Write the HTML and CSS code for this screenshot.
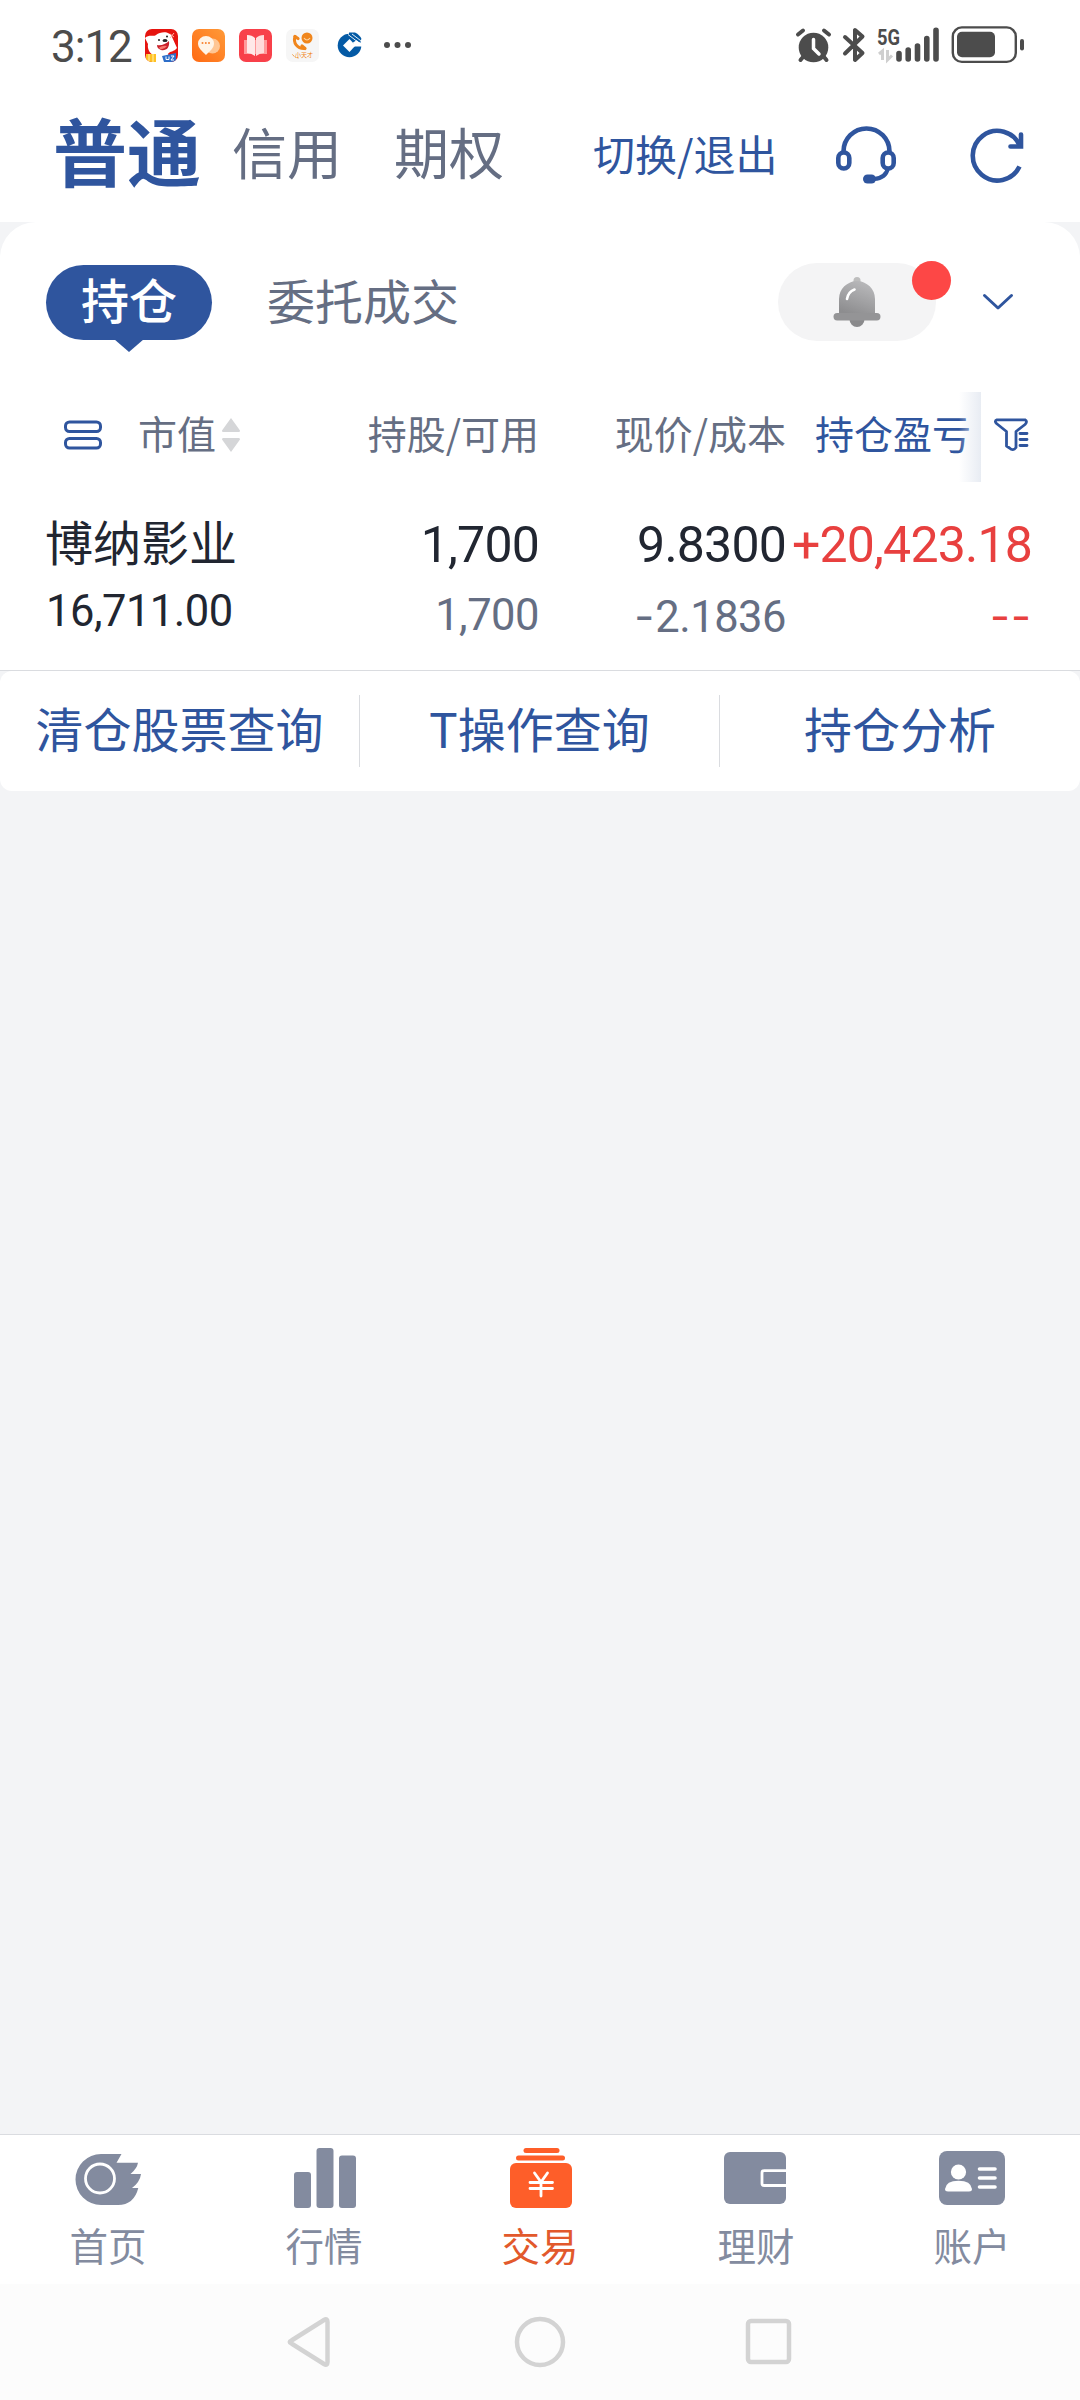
FILE: index.html
```html
<!DOCTYPE html>
<html lang="zh-CN">
<head>
    <meta charset="UTF-8">
    <meta name="viewport" content="width=device-width, initial-scale=1.0">
    <title>交易</title>
    <link rel="stylesheet" href="styles.css">
</head>
<body>
    <div class="status">
        <span class="time">3:12</span>
        <div class="apps">
            <svg width="33" height="33" viewBox="0 0 33 33">
                <clipPath id="app"><rect width="33" height="33" rx="7"/></clipPath>
                <g clip-path="url(#app)">
                    <rect width="33" height="33" fill="#e6140f"/>
                    <path d="M0 9C4 5 8 8 11 6C16 2 25 2 27 8L32 19C29 23 25 22 23 25L26 33H10V27C5 25 2 20 3 15Z" fill="#fff"/>
                    <path d="M12 16C16 17 21 15 24 12C25 19 21 22 16 21C13 20 12 18 12 16Z" fill="#c9202a"/>
                    <path d="M14 18.500Q18 16 22 17Q19 21 15 20Z" fill="#f7776d"/>
                    <ellipse cx="20" cy="11.500" rx="2.500" ry="1.600" fill="#222"/>
                    <circle cx="14" cy="11" r="1" fill="#222"/>
                    <circle cx="22" cy="7.500" r="1" fill="#222"/>
                    <path d="M25 5l4 3M29 4l-4 5" stroke="#ffb5a8"/>
                    <path d="M1 25H11V33H1Z" fill="#ffc123"/>
                    <path d="M4 25V33M8 25V33" stroke="#fff1b0"/>
                    <path d="M17 27L31 24V33H19Z" fill="#2d6ec9"/>
                    <path d="M21 27.500v3h3v-3M26 27h3l-3 4h3" stroke="#fff" fill="none"/>
                </g>
            </svg>
            <svg width="33" height="33" viewBox="0 0 33 33">
                <linearGradient id="orange" x1="0" y1="1" x2="1" y2="0">
                    <stop offset="0" stop-color="#ff6a14"/>
                    <stop offset="1" stop-color="#ff9a38"/>
                </linearGradient>
                <rect width="33" height="33" rx="7" fill="url(#orange)"/>
                <circle cx="20.500" cy="17" r="7.500" fill="#ffc694"/>
                <path d="M14 26C10 22 6 19 6 14.500A8 7.500 0 0 1 22 14.500C22 19 18 22 14 26Z" fill="#fff4e8"/>
                <g fill="#f98330"><circle cx="10.500" cy="14" r="1"/><circle cx="13.800" cy="14" r="1"/><circle cx="17" cy="14" r="1"/></g>
            </svg>
            <svg width="33" height="33" viewBox="0 0 33 33">
                <rect width="33" height="33" rx="7" fill="#f8404a"/>
                <path d="M5 11H28V25H5Z" fill="#ff9a9b"/>
                <path d="M8 6Q13 6 16 9V27Q12 24 8 24Z" fill="#ffe9e9"/>
                <path d="M25 6Q20 6 17 9V27Q21 24 25 24Z" fill="#ffdcdc"/>
            </svg>
            <svg width="33" height="33" viewBox="0 0 33 33">
                <rect width="33" height="33" rx="7" fill="#f6f6f6"/>
                <circle cx="21" cy="9" r="5.500" fill="#f0861c"/>
                <path d="M18 9Q21 13 24 9" stroke="#ffd4a0" fill="none" stroke-width="1.200"/>
                <path d="M9 7.500C7 14 11 19.500 18 19.500" stroke="#f0861c" stroke-width="3" fill="none" stroke-linecap="round"/>
                <path d="M9 7.500l3 2M16 17l3 2.500" stroke="#f0861c" stroke-width="3.200" stroke-linecap="round"/>
                <text x="9" y="28" class="tiny">小天才</text>
                <path d="M6.500 25.500q2 3 6 3.500" stroke="#f0861c" fill="none" stroke-dasharray="2 1"/>
            </svg>
            <svg width="33" height="33" viewBox="0 0 33 33">
                <circle cx="16.500" cy="16.500" r="11.800" fill="#045aa5"/>
                <path d="M16.500 10L22.500 16.500L16.500 23L10 16.500Z" fill="#fff"/>
                <path d="M20 13.500L24 11L27 13.500H29V17.500H21Z" fill="#fff"/>
                <path d="M16 3.500H22Q27 6 28.500 10L26 13L16 5Z" fill="#045aa5"/>
                <path d="M15 5.500L25.500 13.500M19 5L27.500 11.500" stroke="#fff" stroke-width=".9"/>
            </svg>
            <svg width="33" height="33" viewBox="0 0 33 33" fill="#4c4c4c">
                <circle cx="7" cy="16" r="3"/><circle cx="17.500" cy="16" r="3"/><circle cx="28" cy="16" r="3"/>
            </svg>
        </div>
        <svg class="system" width="230" height="38" viewBox="0 0 230 38" fill="#4c4c4c" stroke="#4c4c4c">
            <g stroke-linecap="round" stroke-width="4">
                <circle cx="18.500" cy="21.500" r="14.800" stroke="none"/>
                <path d="M3 8.500L8 4.500M34 8.500L29 4.500M8 31L5.500 34M29 31L31.500 34"/>
                <path d="M18.500 13.500V22.500L24 28" stroke="#fff" stroke-width="3.500" fill="none"/>
            </g>
            <path d="M50 11L67.500 27L60 34V23.500M50 27.500L67.500 10.500L60 4V17" fill="none" stroke-width="4" stroke-linecap="round" stroke-linejoin="round"/>
            <text x="82" y="18.500" stroke="none" textLength="23" lengthAdjust="spacingAndGlyphs" class="net">5G</text>
            <path d="M84 28L87.500 25V34M92.500 24V34L97 29.500" stroke="#cfcfcf" stroke-width="3" fill="none"/>
            <path d="M104 27.500V33M113.200 24V33M122.500 20V33M131.800 12.500V33M141 4.200V33" stroke-width="5.600" stroke-linecap="round"/>
            <rect x="157.800" y="1.400" width="63" height="34.500" rx="9" fill="none" stroke-width="2.400"/>
            <rect x="162" y="5.700" width="38" height="25.600" rx="5" stroke="none"/>
            <rect x="225" y="13" width="4" height="11.500" rx="2" stroke="none"/>
        </svg>
    </div>

    <header class="top">
        <nav class="accounts">
            <a class="current">普通</a>
            <a>信用</a>
            <a>期权</a>
        </nav>
        <a class="switch">切换/退出</a>
        <svg class="service" width="60" height="58" viewBox="0 0 60 58" fill="none" stroke="#2f559e" stroke-width="4.600">
            <path d="M7.500 25.500A23 23 0 0 1 53.500 25.500"/>
            <rect x="2.300" y="26.500" width="11" height="16" rx="5.500"/>
            <rect x="46.700" y="26.500" width="11" height="16" rx="5.500"/>
            <path d="M52 42Q50 52 38 53" stroke-width="4"/>
            <rect x="27" y="48.500" width="13" height="9" rx="4.500" fill="#2f559e" stroke="none"/>
        </svg>
        <svg class="refresh" width="56" height="56" viewBox="0 0 56 56" fill="none" stroke="#2f559e" stroke-width="4.600">
            <path d="M50.500 38.500A24.600 24.800 0 1 1 51 18"/>
            <path d="M52 6.500V18.500H41.500" stroke-linecap="round"/>
        </svg>
    </header>

    <main class="page">
        <section class="holdings">
            <div class="tabs">
                <span class="pill">持仓</span>
                <span class="tab">委托成交</span>
                <span class="alert">
                    <svg width="48" height="50" viewBox="0 0 48 50">
                        <linearGradient id="bell" x1="0.700" y1="0" x2="0.300" y2="1">
                            <stop offset="0" stop-color="#b9b9bb"/>
                            <stop offset="1" stop-color="#8d8d8f"/>
                        </linearGradient>
                        <circle cx="24" cy="3.500" r="3.500" fill="#bdbdbd"/>
                        <circle cx="24" cy="42.500" r="7.500" fill="#8a8a8c"/>
                        <path d="M6 37V22A18 18 0 0 1 42 22V37Z" fill="url(#bell)"/>
                        <rect x="0.500" y="36" width="47" height="7.500" rx="3.700" fill="#949496"/>
                        <path d="M14 22Q15 15 21.500 12.500" stroke="#fff" stroke-width="2.600" fill="none" stroke-linecap="round"/>
                    </svg>
                    <i class="dot"></i>
                </span>
                <svg class="more" width="32" height="18" viewBox="0 0 32 18" fill="none" stroke="#2f559e" stroke-width="3" stroke-linecap="round" stroke-linejoin="round">
                    <path d="M2.500 2.500L16 15L29.500 2.500"/>
                </svg>
            </div>

            <div class="cols head">
                <div class="sort">
                    <svg width="38" height="30" viewBox="0 0 38 30" fill="none" stroke="#2f559e" stroke-width="3">
                        <rect x="1.500" y="2" width="35" height="9.500" rx="4"/>
                        <rect x="1.500" y="18.500" width="35" height="9.500" rx="4"/>
                    </svg>
                    <span>市值</span>
                    <svg class="arrows" width="18" height="34" viewBox="0 0 18 34" fill="#d5d6d8">
                        <path d="M9 0L18 12.500Q18 14 17 14H1Q0 14 0 12.500ZM9 34L18 21.500Q18 20 17 20H1Q0 20 0 21.500Z"/>
                    </svg>
                </div>
                <span>持股/可用</span>
                <span>现价/成本</span>
                <div class="profit">
                    <span>持仓盈亏</span>
                    <svg width="34" height="34" viewBox="0 0 34 34" fill="none" stroke="#2f559e" stroke-width="2.800" stroke-linejoin="round">
                        <path d="M3 1.800H31Q34 3.500 31 6.500L22 13.500V29.500Q19 33.500 15.500 30L12.500 28V13.500L2.500 5.500Q0 3 3 1.800Z"/>
                        <path d="M26 15.500H33M26 21.500H33M26 27.500H33" stroke-linecap="round"/>
                    </svg>
                </div>
            </div>

            <div class="cols stock">
                <div class="name">博纳影业</div>
                <div class="num">1,700</div>
                <div class="num">9.8300</div>
                <div class="num up">+20,423.18</div>
                <div class="small value">16,711.00</div>
                <div class="small">1,700</div>
                <div class="small"><span class="dash">-</span>2.1836</div>
                <div class="small up"><span class="dash">--</span></div>
            </div>
        </section>

        <section class="links">
            <a>清仓股票查询</a>
            <a>T操作查询</a>
            <a>持仓分析</a>
        </section>
    </main>

    <nav class="tabbar">
        <a>
            <svg width="72" height="60" viewBox="0 0 72 60" fill="#838b9f">
                <path d="M29 6H49.500L44.500 14.700H66Q65 20.500 58.500 26H69Q68 34 60 40H66.300Q62 57 46 57H29A25.500 25.500 0 0 1 29 6Z"/>
                <ellipse cx="28" cy="30.500" rx="14.500" ry="14.500" fill="none" stroke="#fff" stroke-width="2.800"/>
            </svg>
            首页
        </a>
        <a>
            <svg width="72" height="60" viewBox="0 0 72 60" fill="#838b9f">
                <rect x="6" y="24" width="17" height="36" rx="3"/>
                <rect x="28.500" y="0" width="17" height="60" rx="3"/>
                <rect x="51" y="7.500" width="17" height="52.500" rx="3"/>
            </svg>
            行情
        </a>
        <a class="active">
            <svg width="72" height="60" viewBox="0 0 72 60" fill="#fe5e29">
                <rect x="19.500" y="0" width="36" height="5" rx="2.500"/>
                <rect x="12" y="7.500" width="49" height="5" rx="2.500"/>
                <rect x="6" y="15" width="62" height="45" rx="6"/>
                <path d="M30.500 25L37 34L43.500 25M26 34.500H48.500M26 40.500H48.500M37 34V48" fill="none" stroke="#fff" stroke-width="2.800" stroke-linecap="round"/>
            </svg>
            交易
        </a>
        <a>
            <svg width="72" height="60" viewBox="0 0 72 60" fill="#838b9f">
                <rect x="4" y="4" width="62" height="52" rx="6"/>
                <path d="M66 22.700H44Q42 22.700 42 24.700V35.500Q42 37.500 44 37.500H66" fill="none" stroke="#fff" stroke-width="2.800"/>
            </svg>
            理财
        </a>
        <a>
            <svg width="72" height="60" viewBox="0 0 72 60" fill="#838b9f">
                <rect x="3" y="3" width="66" height="54" rx="8"/>
                <g fill="#fff">
                    <circle cx="22.500" cy="24" r="7.600"/>
                    <path d="M9 41Q10 32.700 22.500 32.700Q35 32.700 36 41Q36 43.500 33 43.500H12Q9 43.500 9 41Z"/>
                </g>
                <path d="M43.500 21H59M43.500 30H59M43.500 39H59" stroke="#fff" stroke-width="3.600" stroke-linecap="round"/>
            </svg>
            账户
        </a>
    </nav>

    <div class="keys">
        <svg width="48" height="54" viewBox="0 0 48 54"><path d="M4.500 25.500L37 5Q40.500 3 40.500 7V47Q40.500 51 37 49L4.500 28.500Q1 27 4.500 25.500Z"/></svg>
        <svg width="54" height="54" viewBox="0 0 54 54"><circle cx="27" cy="27" r="23"/></svg>
        <svg width="48" height="54" viewBox="0 0 48 54"><rect x="3" y="6" width="41" height="41" rx="3"/></svg>
    </div>
</body>
</html>
```
FILE: styles.css
```css
* {
    box-sizing: border-box;
}

body {
    display: flex;
    flex-direction: column;
    height: 2400px;
    margin: 0;
    background: #fff;
    color: #656e83;
    font-family: 'Noto Sans CJK SC', sans-serif;
}

svg {
    display: block;
    flex: none;
    overflow: visible;
}

/* status bar */
.status {
    display: flex;
    align-items: flex-start;
    height: 92px;
    padding: 26px 55px 0 51px;
}

.time {
    width: 94px;
    color: #4c4c4c;
    font: 500 44px/43px Roboto, sans-serif;
    font-weight: 400;
    letter-spacing: -1px;
}

.apps {
    display: flex;
    gap: 14px;
    padding-top: 3px;
}

.tiny {
    font-size: 6px;
    fill: #f0861c;
}

.system {
    margin-left: auto;
}

.net {
    font: bold 22px Roboto, sans-serif;
}

/* account switcher */
.top {
    display: flex;
    align-items: center;
    height: 130px;
    padding: 0 55px 7px 53px;
}

.accounts {
    display: flex;
    align-items: center;
    gap: 52px;
    padding-bottom: 7px;
    font-size: 55px;
    line-height: 80px;
}

.current {
    margin-right: -21px;
    color: #2f559e;
    font-size: 74px;
    font-weight: bold;
    transform: translateY(-1px);
}

.switch {
    margin-left: 89px;
    padding-bottom: 2px;
    color: #2f559e;
    font-size: 42px;
}

.service {
    margin: 2px 73px 0 auto;
}

.refresh {
    margin-top: 4px;
}

/* holdings */
.page {
    flex: 1;
    background: #f3f4f6;
}

.holdings {
    height: 449px;
    padding-top: 41px;
    border-bottom: 1px solid #dadce0;
    border-radius: 36px 36px 0 0;
    background: #fff;
}

.tabs {
    display: flex;
    align-items: center;
    height: 78px;
    padding: 0 66px 0 46px;
    font-size: 48px;
}

.pill {
    position: relative;
    width: 166px;
    height: 75px;
    border-radius: 38px;
    background: #2f559e;
    color: #fff;
    font-weight: 500;
    line-height: 67px;
    text-align: center;
}

.pill::after {
    content: '';
    position: absolute;
    top: 74px;
    left: 68px;
    border: 15px solid transparent;
    border-top: 13px solid #2f559e;
    border-bottom: 0;
}

.tab {
    margin-left: 55px;
    padding-bottom: 7px;
}

.alert {
    position: relative;
    display: flex;
    align-items: center;
    justify-content: center;
    width: 158px;
    height: 78px;
    margin-left: auto;
    border-radius: 39px;
    background: #f4f4f5;
}

.dot {
    position: absolute;
    top: -2px;
    left: 134px;
    width: 39px;
    height: 39px;
    border-radius: 50%;
    background: #fd4746;
}

.more {
    margin-left: 46px;
}

.cols {
    display: grid;
    grid-template-columns: 290px 249px 247px 246px;
    padding-right: 48px;
    text-align: right;
}

.head {
    position: relative;
    align-items: center;
    height: 90px;
    margin-top: 51px;
    padding-bottom: 5px;
    font-size: 39px;
    line-height: 60px;
}

.head span {
    padding-bottom: 5px;
}

/* scroll shadow beside the filter button */
.head::after {
    content: '';
    position: absolute;
    top: 0;
    left: 959px;
    width: 22px;
    height: 90px;
    background: linear-gradient(to right, rgba(225, 230, 240, 0), #e8ecf3);
}

.sort {
    display: flex;
    align-items: center;
    padding-left: 64px;
}

.sort span {
    margin-left: 36px;
}

.arrows {
    margin-left: 6px;
}

.profit {
    display: flex;
    align-items: center;
    justify-content: space-between;
    padding: 0 4px 0 29px;
    color: #2f559e;
}

.stock {
    padding-top: 30px;
    color: #212631;
    font-family: Roboto, 'Noto Sans CJK SC', sans-serif;
}

.name {
    padding-left: 45px;
    font-family: 'Noto Sans CJK SC', sans-serif;
    font-size: 48px;
    line-height: 56px;
    text-align: left;
}

.num {
    font-size: 50px;
    line-height: 66px;
    letter-spacing: -0.8px;
    white-space: nowrap;
}

.small {
    color: #656e83;
    font-size: 43.5px;
    line-height: 76px;
    letter-spacing: -0.5px;
}

.value {
    padding-left: 46px;
    color: #212631;
    line-height: 68px;
    text-align: left;
}

.dash {
    font-family: Inter, sans-serif;
    letter-spacing: 1px;
}

.stock .up {
    color: #e8403f;
}

.links {
    display: grid;
    grid-template-columns: repeat(3, 1fr);
    align-items: center;
    height: 120px;
    border-radius: 12px;
    background: #fff;
    color: #2f559e;
    font-size: 48px;
    text-align: center;
}

.links a {
    height: 72px;
    border-right: 1px solid #dadce0;
    line-height: 64px;
}

.links a:last-child {
    border-right: 0;
}

/* bottom tabs */
.tabbar {
    display: grid;
    grid-template-columns: repeat(5, 1fr);
    height: 150px;
    border-top: 1px solid #dadce0;
    color: #838b9f;
    font-size: 38.5px;
    line-height: 56px;
}

.tabbar a {
    display: flex;
    flex-direction: column;
    align-items: center;
    gap: 8px;
    padding-top: 13px;
}

.tabbar .active {
    color: #e2592c;
}

/* navigation keys */
.keys {
    display: flex;
    align-items: center;
    justify-content: center;
    gap: 178px;
    height: 116px;
    background: #fcfcfc;
    fill: none;
    stroke: #d3d3d3;
    stroke-width: 4.5px;
}
```
